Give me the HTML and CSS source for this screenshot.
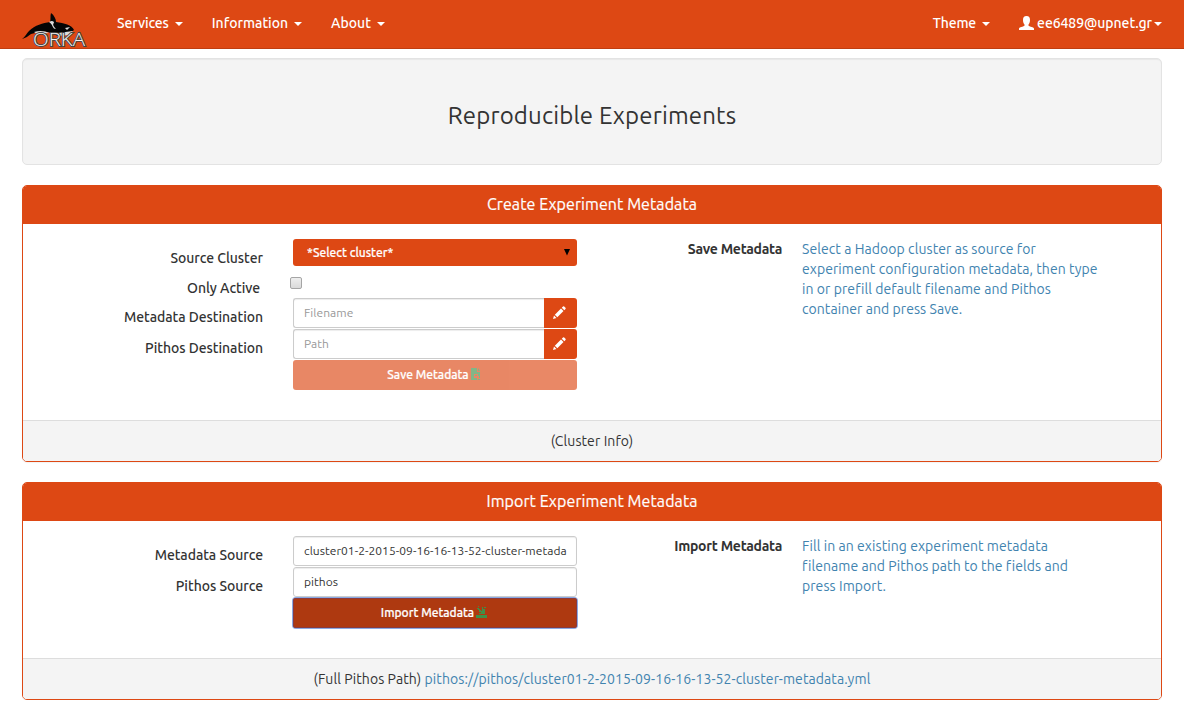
FILE: index.html
```html
<!DOCTYPE html>
<html lang="en">
<head>
<meta charset="utf-8">
<title>Reproducible Experiments</title>
<link rel="stylesheet" href="styles.css">
</head>
<body>
<nav class="navbar">
  <a class="brand">
    <svg width="66" height="36" viewBox="0 0 66 36">
      <path d="M0 26C3 24 5 20 7 18C13 12 21 10 28 9C29 6 28 3 29 0C32 2 34 6 34 9C42 10 50 12 52 17L48 20C41 21 38 25 31 21C24 17 16 19 9 21C6 23 4 25 0 26Z" fill="#050505"/>
      <path d="M27 9C30 7 32 8 32 10C30 11 32 14 34 16C30 16 31 11 27 9ZM43 15L48 14L45 17ZM12 19C18 17 23 18 27 20L15 21ZM36 20L51 18L47 22L37 23Z" fill="#ddd"/>
      <text class="brand-text" x="11" y="32.5" textLength="52" lengthAdjust="spacingAndGlyphs">ORKA</text>
    </svg>
  </a>
  <ul class="menu">
    <li class="tight"><span>Services</span><i class="caret"></i></li>
    <li><span>Information</span><i class="caret"></i></li>
    <li><span>About</span><i class="caret"></i></li>
  </ul>
  <ul class="menu menu-right">
    <li class="tight"><span>Theme</span><i class="caret"></i></li>
    <li class="user">
      <svg width="15" height="14" viewBox="0 0 15 14"><path d="M7.500 0C10 0 11 1.500 11 4C11 6 10.300 7.500 9.500 8.500V9.700C11 10.700 14.500 11 15 12.500V14H0V12.500C.5 11 4 10.700 5.500 9.700V8.500C4.700 7.500 4 6 4 4C4 1.500 5 0 7.500 0Z" fill="#fff"/></svg>
      <span>ee6489@upnet.gr</span><i class="caret"></i></li>
  </ul>
</nav>
<main>
  <header class="hero"><h1>Reproducible Experiments</h1></header>

  <section class="panel">
    <h2>Create Experiment Metadata</h2>
    <div class="panel-body create">
      <form class="fields">
        <div class="row row-select"><label>Source Cluster</label><div class="select"><span>*Select cluster*</span><svg width="6" height="7" viewBox="0 0 6 7"><path d="M0 0H6L3 6.500Z"/></svg></div></div>
        <div class="row row-check"><label>Only Active</label><span class="checkbox"></span></div>
        <div class="row"><label>Metadata Destination</label><div class="group"><span class="input placeholder">Filename</span><span class="addon"><svg width="13" height="13" viewBox="0 0 13 13"><path d="M0 13L1 9.500L3.500 12ZM1.800 8.700L8 2.500L10.500 5L4.300 11.200ZM8.800 1.700L10 .5Q10.600 0 11.200 .5L12.500 1.800Q13 2.400 12.500 3L11.300 4.200Z" fill="#fff"/></svg></span></div></div>
        <div class="row"><label>Pithos Destination</label><div class="group"><span class="input placeholder">Path</span><span class="addon"><svg width="13" height="13" viewBox="0 0 13 13"><path d="M0 13L1 9.500L3.500 12ZM1.800 8.700L8 2.500L10.500 5L4.300 11.200ZM8.800 1.700L10 .5Q10.600 0 11.200 .5L12.500 1.800Q13 2.400 12.500 3L11.300 4.200Z" fill="#fff"/></svg></span></div></div>
        <div class="row"><span class="button disabled"><span>Save Metadata</span><svg width="10" height="12" viewBox="0 0 10 12"><path fill-rule="evenodd" d="M0 0H6V4H9V6H3V10H4V12H0ZM7 0L9 3H7ZM4 7H6V8H4ZM7 6H9V10H8V8H7ZM4 10H6V12H4ZM7 11H9V12H7Z"/></svg></span></div>
      </form>
      <strong>Save Metadata</strong>
      <p>Select a Hadoop cluster as source for<br>experiment configuration metadata, then type<br>in or prefill default filename and Pithos<br>container and press Save.</p>
    </div>
    <footer><span class="info">(Cluster Info)</span></footer>
  </section>

  <section class="panel">
    <h2>Import Experiment Metadata</h2>
    <div class="panel-body import">
      <form class="fields">
        <div class="row"><label>Metadata Source</label><div class="input">cluster01-2-2015-09-16-16-13-52-cluster-metada</div></div>
        <div class="row"><label>Pithos Source</label><div class="input">pithos</div></div>
        <div class="row"><span class="button active"><span>Import Metadata</span><svg width="11" height="12" viewBox="0 0 11 12"><path d="M0 9H11V12H0ZM2 0H3V1H2ZM1 2H3V3H4V4H5V5H6V1H7V3H9V8H3V7H5V6H3V4H2V3H1ZM8 1H10V2H8Z"/></svg></span></div>
      </form>
      <strong>Import Metadata</strong>
      <p>Fill in an existing experiment metadata<br>filename and Pithos path to the fields and<br>press Import.</p>
    </div>
    <footer>(Full Pithos Path) <a class="path">pithos://pithos/cluster01-2-2015-09-16-16-13-52-cluster-metadata.yml</a></footer>
  </section>
</main>
</body>
</html>
```
FILE: styles.css
```css
* { box-sizing: border-box; }
body { margin: 0; background: #fff; color: #333; font: 14px/20px Ubuntu, "Noto Sans", sans-serif; }
h1, h2, p, ul { margin: 0; padding: 0; font-weight: 400; }
svg { display: block; flex: none; }
.navbar { display: flex; height: 49px; padding: 0 22px; background: #dd4814; border-bottom: 1px solid #bf3e11; color: #fff; }
.brand { padding-top: 13px; width: 95px; }
.brand svg { overflow: visible; }
.brand-text { font: 300 18px "Open Sans", sans-serif; fill: #f2f2f2; stroke: #444; stroke-width: 1.8px; paint-order: stroke; }
.menu { display: flex; gap: 29px; list-style: none; font-weight: 500; }
.menu li { display: flex; align-items: center; gap: 6px; height: 46px; white-space: nowrap; }
.menu .tight { letter-spacing: -.13px; }
.menu-right { margin-left: auto; }
.caret { border: 4px solid transparent; border-top-color: #fff; border-bottom: 0; margin-top: 2px; }
.menu .user { gap: 3px; letter-spacing: -.06px; }
.user .caret { margin-left: -1px; }
main { display: flex; flex-direction: column; gap: 20px; padding: 9px 22px 0; }
.hero { height: 107px; border: 1px solid #e3e3e3; border-radius: 5px; background: #f4f4f4; box-shadow: inset 0 1px 1px rgba(0,0,0,.05); text-align: center; padding-top: 44px; }
h1 { font-size: 24px; line-height: 26px; letter-spacing: .16px; }
.panel { border: 1px solid #dd4814; border-radius: 5px; box-shadow: 0 1px 1px rgba(0,0,0,.05); }
h2 { height: 38px; background: #dd4814; color: #fff; text-align: center; font-size: 16px; line-height: 37px; letter-spacing: .08px; -webkit-text-stroke: .2px; border-radius: 4px 4px 0 0; }
.panel-body { display: grid; grid-template-columns: 554px 185px 320px; column-gap: 20px; padding-top: 15px; }
.create { height: 196px; }
.import { height: 137px; }
.row { display: grid; grid-template-columns: 240px 284px; column-gap: 30px; height: 31px; }
.row label { text-align: right; padding-top: 9px; font-weight: 500; letter-spacing: -.04px; white-space: nowrap; }
.row .button { grid-column: 2; }
.row-select { height: 36px; }
.row-check { height: 23px; }
.row-check label { padding: 3px 3px 0 0; }
.select { display: flex; align-items: center; justify-content: space-between; height: 27px; padding: 0 7px 0 14px; border-radius: 3px; background: #dd4814; color: #fff; font-size: 12px; font-weight: 500; -webkit-text-stroke: .2px; }
.checkbox { width: 12px; height: 12px; margin: 2px 0 0 -3px; border: 1px solid #a5a5a5; border-radius: 2px; background: linear-gradient(#eee, #dadada); }
.group { display: flex; }
.input { flex: 1; height: 30px; padding: 0 10px; border: 1px solid #ccc; border-radius: 3px; box-shadow: inset 0 1px 1px rgba(0,0,0,.075); background: #fff; font-size: 12px; line-height: 28px; letter-spacing: .05px; white-space: nowrap; overflow: hidden; }
.group .input { border-radius: 3px 0 0 3px; border-right: 0; }
.placeholder { color: #999; }
.addon { display: flex; justify-content: center; width: 33px; height: 30px; padding: 8px 2px 0 0; background: #dd4814; border-radius: 0 3px 3px 0; }
.button { display: flex; justify-content: center; align-items: center; gap: 2px; height: 30px; padding-right: 2px; border-radius: 3px; background: #dd4814; color: #fff; font-size: 12px; font-weight: 500; -webkit-text-stroke: .2px; }
.button svg { margin-top: -3px; fill: #3f9048; stroke: none; }
.disabled { opacity: .65; }
.active { background: #ae3910; box-shadow: inset 0 0 0 1px #8c3b3d, 0 0 0 1px #8aa9e4; }
strong { text-align: right; font-weight: 600; letter-spacing: -.25px; white-space: nowrap; }
p { color: #4183af; letter-spacing: .07px; white-space: nowrap; }
footer { height: 41px; border-top: 1px solid #ddd; border-radius: 0 0 4px 4px; background: #f4f4f4; text-align: center; line-height: 40px; letter-spacing: .09px; white-space: nowrap; }
.path { color: #4183af; }
```
